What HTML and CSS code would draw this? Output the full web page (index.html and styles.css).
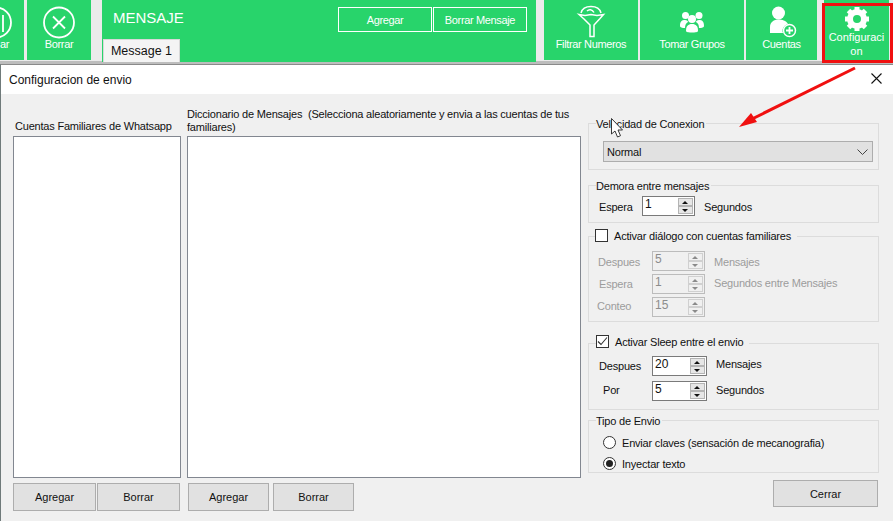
FILE: index.html
```html
<!DOCTYPE html>
<html lang="es">
<head>
<meta charset="utf-8">
<title>Configuracion de envio</title>
<link rel="stylesheet" href="styles.css">
</head>
<body>
<div class="screen">
  <header class="toolbar">
    <div class="tile tile-clip">
      <svg class="tile-icon-left" width="24" height="40" viewBox="0 0 24 40"><circle cx="-4" cy="22.500" r="15" fill="none" stroke="#fff" stroke-width="1.800"/><path d="M-1 15V29Q-1 32-4 32H-8M3 15V32" fill="none" stroke="#fff" stroke-width="1.800"/></svg>
      <span class="tile-label tile-label-clip">ar</span>
    </div>
    <div class="tile tile-borrar">
      <svg width="40" height="40" viewBox="0 0 40 40"><circle cx="20" cy="22.500" r="15" fill="none" stroke="#fff" stroke-width="1.800"/><path d="M14 16.500L26 28.500M26 16.500L14 28.500" stroke="#fff" stroke-width="1.800"/></svg>
      <span class="tile-label">Borrar</span>
    </div>
    <section class="panel">
      <div class="panel-head">
        <h1 class="panel-title">MENSAJE</h1>
        <div class="panel-actions">
          <button class="ghost ghost-add">Agregar</button>
          <button class="ghost">Borrar Mensaje</button>
        </div>
      </div>
      <div class="tab">Message 1</div>
    </section>
    <div class="tile tile-filtrar">
      <svg width="40" height="40" viewBox="0 0 40 40"><g fill="none" stroke="#fff" stroke-width="1.500"><path d="M10 13C11 9 15 6.500 20 6.500C25 6.500 29 9 30 13"/><path d="M8 14.500L14 15.500L20 14.500L26 15.500L32.500 14.500L29 18.500L23 25V36.500H19V25L13 19Z"/><path d="M16 11C18 9 21 9 23 12.500"/></g></svg>
      <span class="tile-label">Filtrar Numeros</span>
    </div>
    <div class="tile tile-tomar">
      <svg width="40" height="40" viewBox="0 0 40 40"><g fill="#fff"><circle cx="13.500" cy="15.500" r="3.500"/><circle cx="27" cy="15.500" r="3.500"/><circle cx="20" cy="19" r="4"/><path d="M8 26C8 21 10 20 13 20C15 20 16 21 16 22C14 23 13 25 13 28C10 28 8 27.500 8 26Z"/><path d="M32 26C32 21 30 20 27 20C25 20 24 21 24 22C26 23 27 25 27 28C30 28 32 27.500 32 26Z"/><path d="M14 31C14 26 16 24 20 24C24 24 26 26 26 31C26 32 23 32.500 20 32.500C17 32.500 14 32 14 31Z"/></g></svg>
      <span class="tile-label">Tomar Grupos</span>
    </div>
    <div class="tile tile-cuentas">
      <svg width="40" height="40" viewBox="0 0 40 40"><circle cx="16.500" cy="13" r="6.500" fill="#fff"/><path d="M8 33V27C8 22 12 19.500 16.500 19.500C20 19.500 24 20.500 26 24C22 25 19.500 29 21 33Z" fill="#fff"/><circle cx="27.500" cy="30.500" r="6" fill="none" stroke="#fff" stroke-width="1.500"/><path d="M24 30.500H31M27.500 27V34" stroke="#fff" stroke-width="1.800"/></svg>
      <span class="tile-label">Cuentas</span>
    </div>
    <div class="tile tile-config">
      <svg width="32" height="32" viewBox="0 0 32 32"><circle cx="16" cy="19" r="7" fill="none" stroke="#fff" stroke-width="6"/><g stroke="#fff" stroke-width="5"><path d="M16 7V11"/><path d="M16 27V31"/><path d="M4 19H8"/><path d="M24 19H28"/><path d="M7.500 10.500L10.300 13.300"/><path d="M21.700 24.700L24.500 27.500"/><path d="M24.500 10.500L21.700 13.300"/><path d="M10.300 24.700L7.500 27.500"/></g></svg>
      <span class="tile-label tile-label-wrap">Configuraci<br>on</span>
    </div>
  </header>

  <main class="dialog">
    <div class="dialog-title">
      <span>Configuracion de envio</span>
      <svg class="close" width="13" height="13" viewBox="0 0 13 13"><path d="M1.500 1.500L11.500 11.500M11.500 1.500L1.500 11.500" stroke="#111" stroke-width="1.100"/></svg>
    </div>
    <div class="dialog-body">
      <div class="list-col list-col-a">
        <div class="list-label">Cuentas Familiares de Whatsapp</div>
        <div class="listbox"></div>
        <div class="btn-row">
          <button class="btn btn-a">Agregar</button>
          <button class="btn btn-a">Borrar</button>
        </div>
      </div>
      <div class="list-col list-col-b">
        <div class="list-label list-label-b">Diccionario de Mensajes&nbsp; (Selecciona aleatoriamente y envia a las cuentas de tus familiares)</div>
        <div class="listbox"></div>
        <div class="btn-row btn-row-b">
          <button class="btn btn-b">Agregar</button>
          <button class="btn btn-b">Borrar</button>
        </div>
      </div>
      <div class="settings">
        <div class="group group-speed">
          <div class="legend">Velocidad de Conexion</div>
          <div class="select">
            <span>Normal</span>
            <svg width="11" height="6" viewBox="0 0 11 6"><path d="M0.500 0.500L5.500 5.500L10.500 0.500" fill="none" stroke="#444"/></svg>
          </div>
        </div>

        <div class="group group-delay">
          <div class="legend">Demora entre mensajes</div>
          <div class="row row-delay">
            <span class="row-label nudge-down">Espera</span>
            <div class="spin"><span class="spin-value">1</span><span class="spin-btns"><i class="up"></i><i class="down"></i></span></div>
            <span class="row-unit nudge-down">Segundos</span>
          </div>
        </div>

        <div class="group group-family">
          <div class="legend legend-check"><span class="check"></span>Activar diálogo con cuentas familiares</div>
          <div class="rows rows-family">
            <div class="row is-off">
              <span class="row-label nudge-down">Despues</span>
              <div class="spin"><span class="spin-value">5</span><span class="spin-btns"><i class="up"></i><i class="down"></i></span></div>
              <span class="row-unit nudge-down">Mensajes</span>
            </div>
            <div class="row is-off">
              <span class="row-label row-label-in">Espera</span>
              <div class="spin"><span class="spin-value">1</span><span class="spin-btns"><i class="up"></i><i class="down"></i></span></div>
              <span class="row-unit nudge-up">Segundos entre Mensajes</span>
            </div>
            <div class="row is-off">
              <span class="row-label row-label-out nudge-up">Conteo</span>
              <div class="spin"><span class="spin-value">15</span><span class="spin-btns"><i class="up"></i><i class="down"></i></span></div>
            </div>
          </div>
        </div>

        <div class="group group-sleep">
          <div class="legend legend-check"><span class="check">
            <svg width="11" height="11" viewBox="0 0 11 11"><path d="M1 5.500L4 8.500L10 1.500" fill="none" stroke="#333" stroke-width="1.100"/></svg>
          </span>Activar Sleep entre el envio</div>
          <div class="rows rows-sleep">
            <div class="row">
              <span class="row-label">Despues</span>
              <div class="spin spin-wide"><span class="spin-value">20</span><span class="spin-btns"><i class="up"></i><i class="down"></i></span></div>
              <span class="row-unit nudge-up-2">Mensajes</span>
            </div>
            <div class="row">
              <span class="row-label row-label-por nudge-up">Por</span>
              <div class="spin spin-wide"><span class="spin-value">5</span><span class="spin-btns"><i class="up"></i><i class="down"></i></span></div>
              <span class="row-unit nudge-up">Segundos</span>
            </div>
          </div>
        </div>

        <div class="group group-type">
          <div class="legend">Tipo de Envio</div>
          <div class="radios">
            <div class="radio-row"><span class="radio"></span>Enviar claves (sensación de mecanografia)</div>
            <div class="radio-row"><span class="radio radio-on"></span>Inyectar texto</div>
          </div>
        </div>

        <button class="btn btn-close">Cerrar</button>
      </div>
    </div>
  </main>

  <div class="highlight"></div>
  <svg class="annotation" width="893" height="521" viewBox="0 0 893 521">
    <path d="M855 68L752 119" stroke="#f01010" stroke-width="3" fill="none"/>
    <path d="M739 127L751 113L757 122Z" fill="#f01010"/>
    <path d="M611.500 118.500V134L615 131L617.500 137L620.500 135.700L618 130L622.500 130Z" fill="#fff" stroke="#222" stroke-width="0.900"/>
  </svg>
</div>
</body>
</html>
```

FILE: styles.css
```css
* { box-sizing: border-box; }
html, body { margin: 0; padding: 0; }
body { font-family: "Liberation Sans", Arial, sans-serif; font-size: 11px; letter-spacing: -0.2px; color: #111; background: #f0f0f0; }
.screen { position: relative; width: 893px; height: 521px; overflow: hidden; }

.toolbar { display: flex; height: 64px; background: linear-gradient(#ebebeb 0, #ebebeb 61px, #bdbdbd 61px, #bdbdbd 64px); color: #fff; }
.tile { display: flex; flex-direction: column; align-items: center; height: 60px; background: #28d46b; position: relative; flex: none; }
.tile svg { display: block; flex: none; }
.tile-label { font-size: 11px; line-height: 14px; margin-top: -3px; letter-spacing: -0.35px; white-space: nowrap; }
.tile-clip { width: 24px; margin-right: 3px; align-items: flex-start; }
.tile-borrar { width: 64px; margin-right: 11px; }
.tile-filtrar { width: 94px; margin-left: 8px; margin-right: 2px; }
.tile-tomar { width: 104px; margin-right: 2px; }
.tile-cuentas { width: 71px; }
.tile-config { width: 65px; margin-left: 7px; }
.tile-label-wrap { line-height: 14px; margin-top: -2px; text-align: center; letter-spacing: 0; }

.panel { width: 434px; height: 62px; background: #28d46b; flex: none; display: flex; flex-direction: column; }
.panel-head { display: flex; justify-content: space-between; height: 39px; padding: 7px 9px 0 11px; }
.panel-title { margin: 2px 0 0; font-size: 15px; line-height: 17px; font-weight: 400; letter-spacing: 0; }
.panel-actions { display: flex; gap: 1px; }
.ghost { width: 94px; height: 25px; border: 1px solid #fff; background: transparent; color: #fff; font: inherit; font-size: 11px; letter-spacing: -0.35px; padding: 0; }
.tab { width: 77px; height: 23px; margin-left: 1px; background: #f4f4f4; border: 1px solid #d8d8d8; border-bottom: 0; color: #111; font-size: 12.500px; letter-spacing: 0; line-height: 22px; text-align: center; }

.dialog { height: 457px; border-left: 1px solid #6f7a7a; border-top: 1px solid #8a8a8a; background: #f0f0f0; }
.dialog-title { display: flex; justify-content: space-between; align-items: center; height: 29px; background: #fff; padding: 0 10px 0 8px; font-size: 12px; letter-spacing: 0; }
.close { margin-bottom: 2px; }
.dialog-body { display: flex; padding-left: 12px; }

.list-col { display: flex; flex-direction: column; flex: none; }
.list-col-a { width: 168px; margin-right: 6px; }
.list-col-b { width: 394px; margin-right: 7px; }
.list-label { height: 42px; display: flex; align-items: flex-end; line-height: 13px; padding-bottom: 3px; }
.list-label-b { padding-bottom: 2px; }
.list-col-a .list-label { padding-left: 2px; }
.listbox { height: 342px; background: #fff; border: 1px solid #828790; }
.btn-row { display: flex; gap: 1px; margin-top: 5px; }
.btn-row-b { gap: 4px; padding-left: 1px; }
.btn { background: #e1e1e1; border: 1px solid #adadad; font: inherit; color: #111; padding: 0; }
.btn-a { width: 83px; height: 28px; }
.btn-b { width: 81px; height: 28px; }

.settings { width: 291px; flex: none; display: flex; flex-direction: column; }
.group { border: 1px solid #dcdcdc; flex: none; width: 291px; }
.legend { width: fit-content; height: 13px; line-height: 15px; margin: -7px 0 0 7px; padding: 0 2px 0 0; background: #f0f0f0; display: flex; align-items: flex-start; }
.legend-check { padding-right: 6px; }
.check { width: 13px; height: 13px; border: 1px solid #333; background: #fff; margin-right: 6px; display: flex; align-items: center; justify-content: center; flex: none; }
.group-speed { margin-top: 29px; height: 47px; }
.group-delay { margin-top: 15px; height: 38px; }
.group-family { margin-top: 13px; height: 86px; }
.group-sleep { margin-top: 21px; height: 67px; }
.group-type { margin-top: 10px; height: 53px; }
.group-family .legend { margin: -8px 0 0 6px; }
.group-sleep .legend { margin: -9px 0 0 7px; }

.select { display: flex; justify-content: space-between; align-items: center; width: 270px; height: 21px; margin: 11px 0 0 14px; padding: 0 4px 0 3px; background: #e1e1e1; border: 1px solid #adadad; }

.row { display: flex; align-items: center; height: 20px; }
.row-delay { margin-top: 4px; padding-left: 10px; }
.row-delay .row-label { width: 43px; }
.row-unit { margin-left: 9px; }
.nudge-down { padding-top: 2px; }
.nudge-up { padding-bottom: 2px; }
.nudge-up-2 { padding-bottom: 4px; }
.rows { display: flex; flex-direction: column; }
.rows-family { margin-top: 9px; gap: 3px; padding-left: 9px; }
.rows-sleep { margin-top: 8px; gap: 5px; padding-left: 10px; }
.rows-family .row-label { width: 54px; }
.rows-sleep .row-label { width: 53px; }
.row-label-in { padding-left: 1px; }
.row-label-out { margin-left: -1px; width: 55px !important; }
.row-label-por { padding-left: 4px; }
.is-off { color: #9c9c9c; }

.spin { display: flex; justify-content: space-between; width: 53px; height: 20px; background: #fff; border: 1px solid #7a7a7a; padding: 1px 1px 1px 2px; flex: none; font-size: 12px; letter-spacing: 0; line-height: 13px; color: #111; }
.spin-wide { width: 55px; }
.spin-btns { width: 15px; display: flex; flex-direction: column; }
.spin-btns i { display: block; flex: 1; background: #e6e6e6; border: 1px solid #b4b4b4; position: relative; }
.spin-btns i::after { content: ""; position: absolute; left: 3px; width: 0; height: 0; border-left: 3px solid transparent; border-right: 3px solid transparent; }
.spin-btns .up::after { top: 2px; border-bottom: 3px solid #111; }
.spin-btns .down::after { top: 2px; border-top: 3px solid #111; }
.is-off .spin { background: #f0f0f0; border-color: #bcbcbc; color: #8c8c8c; }
.is-off .spin-btns i { background: #f0f0f0; border-color: #d0d0d0; }
.is-off .spin-btns .up::after { border-bottom-color: #8a8a8a; }
.is-off .spin-btns .down::after { border-top-color: #8a8a8a; }

.radios { display: flex; flex-direction: column; gap: 8px; margin-top: 9px; padding-left: 14px; }
.radio-row { display: flex; align-items: center; height: 13px; }
.radio { width: 13px; height: 13px; border: 1px solid #333; border-radius: 50%; background: #fff; margin-right: 6px; display: flex; align-items: center; justify-content: center; flex: none; }
.radio-on::after { content: ""; width: 7px; height: 7px; border-radius: 50%; background: #222; }
.btn-close { width: 105px; height: 27px; margin: 7px 0 0 185px; }

.highlight { position: absolute; left: 822px; top: 3px; width: 71px; height: 60px; border: 3px solid #f01010; }
.annotation { position: absolute; left: 0; top: 0; pointer-events: none; }
```
